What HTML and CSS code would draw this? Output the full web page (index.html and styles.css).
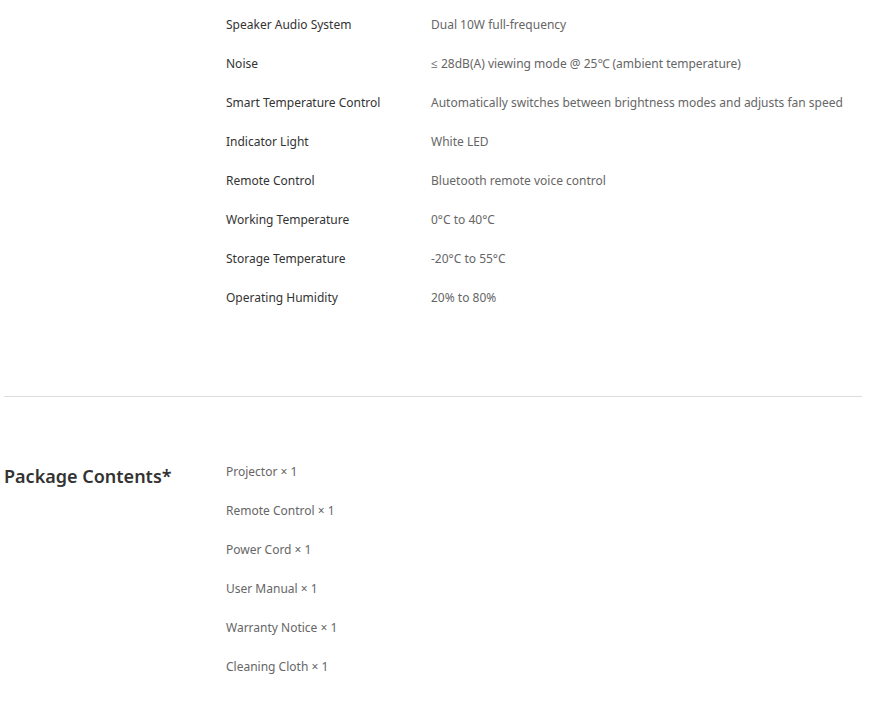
FILE: index.html
```html
<!DOCTYPE html>
<html>
<head>
<meta charset="utf-8">
<link rel="stylesheet" href="styles.css">
</head>
<body>
<div class="page">
  <section class="spec">
    <div class="spec-title"></div>
    <div class="spec-list">
      <div class="row"><div class="label">Speaker Audio System</div><div class="value">Dual 10W full-frequency</div></div>
      <div class="row"><div class="label">Noise</div><div class="value">≤ 28dB(A) viewing mode @ 25℃ (ambient temperature)</div></div>
      <div class="row"><div class="label">Smart Temperature Control</div><div class="value">Automatically switches between brightness modes and adjusts fan speed</div></div>
      <div class="row"><div class="label">Indicator Light</div><div class="value">White LED</div></div>
      <div class="row"><div class="label">Remote Control</div><div class="value">Bluetooth remote voice control</div></div>
      <div class="row"><div class="label">Working Temperature</div><div class="value">0°C to 40°C</div></div>
      <div class="row"><div class="label">Storage Temperature</div><div class="value">-20°C to 55°C</div></div>
      <div class="row"><div class="label">Operating Humidity</div><div class="value">20% to 80%</div></div>
    </div>
  </section>
  <hr class="divider">
  <section class="spec pkg">
    <h2 class="spec-title">Package Contents*</h2>
    <div class="spec-list">
      <div class="row"><div class="item">Projector × 1</div></div>
      <div class="row"><div class="item">Remote Control × 1</div></div>
      <div class="row"><div class="item">Power Cord × 1</div></div>
      <div class="row"><div class="item">User Manual × 1</div></div>
      <div class="row"><div class="item">Warranty Notice × 1</div></div>
      <div class="row"><div class="item">Cleaning Cloth × 1</div></div>
    </div>
  </section>
</div>
</body>
</html>
```
FILE: styles.css
```css
html, body { margin: 0; padding: 0; background: #fff; }
body { font-family: "Noto Sans", "Open Sans", sans-serif; font-size: 12px; }
.page { width: 858px; padding: 5px 0 0 4px; }
.spec { display: flex; }
.spec-title { width: 222px; flex: none; margin: 0; }
.spec-list { display: flex; flex-direction: column; flex: 1; }
.row { display: flex; height: 39px; align-items: center; }
.label { width: 205px; flex: none; color: #333; }
.value { color: #666; white-space: nowrap; }
.item { color: #666; }
.divider { border: none; border-top: 1px solid #ddd; margin: 79px 0 55px 0; }
.pkg .spec-title { font-size: 18px; font-weight: 600; color: #333; line-height: 26px; padding-top: 11px; }
```
